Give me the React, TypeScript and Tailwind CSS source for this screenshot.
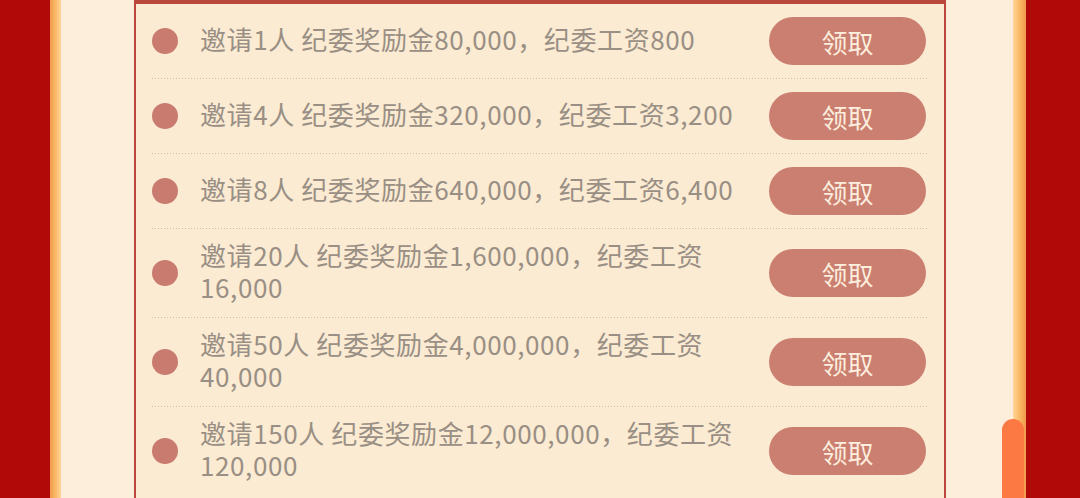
import React from "react";

const rows: { text: string }[] = [
  { text: "邀请1人 纪委奖励金80,000，纪委工资800" },
  { text: "邀请4人 纪委奖励金320,000，纪委工资3,200" },
  { text: "邀请8人 纪委奖励金640,000，纪委工资6,400" },
  { text: "邀请20人 纪委奖励金1,600,000，纪委工资16,000" },
  { text: "邀请50人 纪委奖励金4,000,000，纪委工资40,000" },
  { text: "邀请150人 纪委奖励金12,000,000，纪委工资120,000" },
];

function Row({ text, last }: { text: string; last: boolean }) {
  return (
    <div className="flex flex-col">
      <div className="flex items-center min-h-[74px] py-[12px]">
        <div className="w-[26px] h-[26px] rounded-full bg-[#c97b70] shrink-0" />
        <div className="ml-[22px] w-[545px] text-[26px] leading-[32px] text-[#998f84] tracking-[0.6px] -translate-y-[2px]">
          {text}
        </div>
        <div className="ml-auto w-[157px] h-[48px] rounded-full bg-[#ca7f71] flex items-center justify-center text-[26px] text-[#fdeede] shrink-0 mr-[2px]">
          领取
        </div>
      </div>
      {!last && (
        <div className="h-px bg-[repeating-linear-gradient(to_right,#c9bdac_0,#c9bdac_1px,transparent_1px,transparent_3px)]" />
      )}
    </div>
  );
}

export default function App() {
  return (
    <div
      className="relative flex w-[1080px] h-[498px] overflow-hidden bg-[#fcecd6]"
      style={{ fontFamily: '"Noto Sans CJK SC", "Noto Sans", sans-serif' }}
    >
      <div className="w-[50px] h-full bg-[#b10808] shrink-0" />
      <div className="w-[11px] h-full bg-[linear-gradient(to_right,#ef9a48,#fbb866,#ffd49a)] shrink-0" />
      <div className="w-[73px] h-full bg-[#fdeedb] shrink-0" />
      <div className="w-[812px] h-full shrink-0 border-l-2 border-r-2 border-t-4 border-[#b9473e] bg-[#fcebd3] px-[16px]">
        {rows.map((r, i) => (
          <Row key={i} text={r.text} last={i === rows.length - 1} />
        ))}
      </div>
      <div className="w-[67px] h-full bg-[#fdeedb] shrink-0" />
      <div className="w-[13px] h-full bg-[linear-gradient(to_right,#ffd698,#fbb866,#ef9a48)] shrink-0" />
      <div className="flex-1 h-full bg-[#b10808]" />
      <div className="absolute left-[1002px] top-[419px] w-[22px] h-[100px] rounded-t-full bg-[#fd7944]" />
    </div>
  );
}
